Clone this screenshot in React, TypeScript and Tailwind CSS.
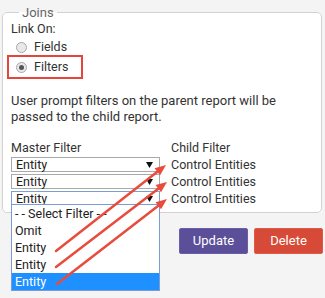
import React from "react"

const font = { fontFamily: "Roboto, 'Liberation Sans', sans-serif" }

const Radio = ({ checked }: { checked?: boolean }) => (
  <span className="inline-flex h-[11px] w-[11px] items-center justify-center rounded-full border border-[#a8a8a8] bg-[#e9e9e9]">
    {checked && <span className="h-[5px] w-[5px] rounded-full bg-[#555]" />}
  </span>
)

const FakeSelect = ({ focused }: { focused?: boolean }) => (
  <div
    className={`flex h-[15px] items-center justify-between border pl-[4px] pr-[6px] text-[12.5px] leading-[13px] text-[#222] ${
      focused ? "border-[#7a9fd6]" : "border-[#a9a9a9]"
    } bg-white`}
  >
    <span>Entity</span>
    <svg width="7" height="6" viewBox="0 0 7 6">
      <path d="M0 0 L7 0 L3.5 6 Z" fill="#111" />
    </svg>
  </div>
)

const options = ["- - Select Filter - -", "Omit", "Entity", "Entity", "Entity"]

export default function App() {
  return (
    <div
      className="relative h-[298px] w-[325px] overflow-hidden bg-[#f4f4f4] pt-[5px] text-[#333]"
      style={font}
    >
      <fieldset className="mx-[2px] h-[208px] w-[320px] rounded-[5px] border border-[#d2d2d2] bg-white pl-[8px] pr-[6px]">
        <legend className="ml-[8px] px-[3px] text-[13px] leading-[15px] text-[#666]">
          Joins
        </legend>
        <div className="mt-[1px] text-[12.5px] leading-[16px]">Link On:</div>
        <div className="flex h-[20px] items-center gap-[7px] pl-[5px] text-[12.5px]">
          <Radio />
          <span>Fields</span>
        </div>
        <div className="flex h-[21px] items-center gap-[7px] pl-[5px] text-[12.5px]">
          <Radio checked />
          <span>Filters</span>
        </div>
        <p className="mt-[15px] text-[13px] leading-[16px]">
          User prompt filters on the parent report will be
          <br />
          passed to the child report.
        </p>
        <div className="mt-[15px] grid grid-cols-[149px_1fr] gap-x-[11px] text-[12.5px]">
          <div className="leading-[16px]">Master Filter</div>
          <div className="leading-[16px]">Child Filter</div>
          <div className="mt-[1px] flex flex-col gap-[2px]">
            <FakeSelect />
            <FakeSelect />
            <FakeSelect focused />
          </div>
          <div className="mt-[1px] flex flex-col gap-[2px] leading-[15px]">
            <span>Control Entities</span>
            <span>Control Entities</span>
            <span>Control Entities</span>
          </div>
        </div>
      </fieldset>

      <div className="mt-[15px] flex justify-end gap-[6px] pr-[2px]">
        <button className="h-[26px] w-[69px] rounded-[2px] border border-[#6a5eaa] bg-[#5b4f9a] text-[13px] text-white">
          Update
        </button>
        <button className="h-[26px] w-[69px] rounded-[2px] border border-[#e05a49] bg-[#d84a38] text-[13px] text-white">
          Delete
        </button>
      </div>

      {/* red highlight around the Filters option */}
      <div className="absolute left-[7px] top-[55px] h-[24px] w-[76px] border-2 border-[#e5463b]" />

      {/* open dropdown list */}
      <div className="absolute left-[11px] top-[204px] w-[149px] border border-[#7a9cd3] bg-white text-[12.5px] text-[#222]">
        {options.map((o, i) => (
          <div
            key={i}
            className={`h-[17px] pl-[3px] leading-[17px] ${
              i === options.length - 1 ? "bg-[#1e90ff] text-white" : ""
            }`}
          >
            {o}
          </div>
        ))}
      </div>

      {/* annotation arrows */}
      <svg className="absolute left-0 top-0" width="325" height="298" viewBox="0 0 325 298">
        {[
          [56, 251, 166, 165],
          [56, 267, 167, 182],
          [57, 284, 167, 199],
        ].map(([x1, y1, x2, y2], i) => {
          const a = Math.atan2(y2 - y1, x2 - x1)
          const len = 11
          const w = 4.5
          const bx = x2 - len * Math.cos(a)
          const by = y2 - len * Math.sin(a)
          const px = -Math.sin(a) * w
          const py = Math.cos(a) * w
          return (
            <g key={i}>
              <line x1={x1} y1={y1} x2={bx} y2={by} stroke="#e74c3c" strokeWidth="2.5" strokeLinecap="round" />
              <polygon
                points={`${x2},${y2} ${bx + px},${by + py} ${bx - px},${by - py}`}
                fill="#e74c3c"
              />
            </g>
          )
        })}
      </svg>
    </div>
  )
}
